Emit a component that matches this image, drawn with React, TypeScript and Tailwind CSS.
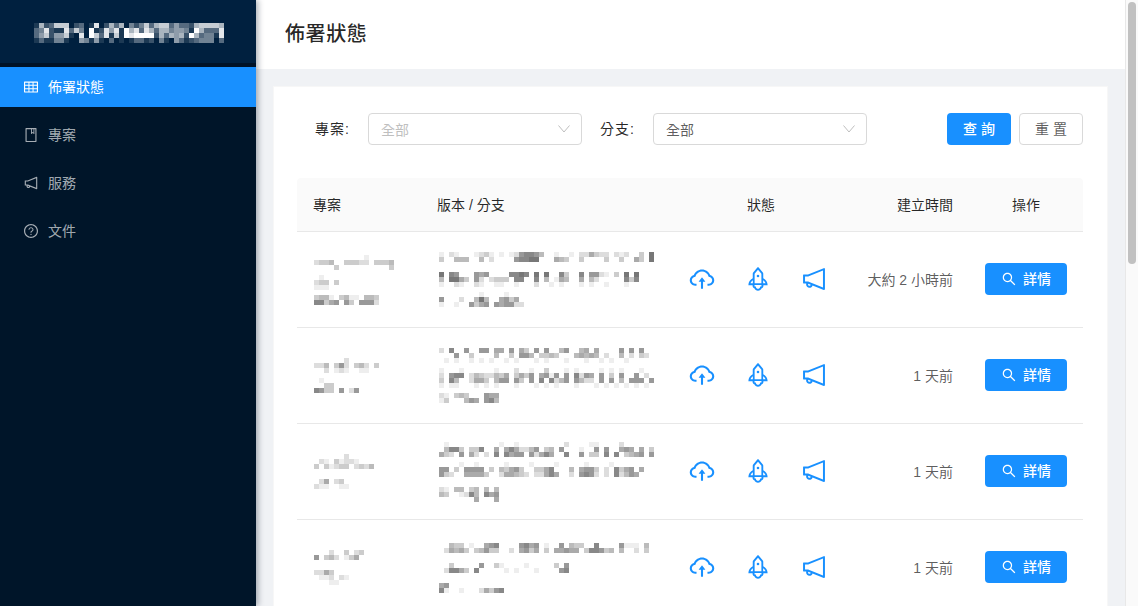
import React from "react";
import { AiOutlineTable, AiOutlineBook, AiOutlineNotification, AiOutlineQuestionCircle, AiOutlineSearch, AiOutlineCloudUpload, AiOutlineRocket } from "react-icons/ai";

function Mosaic({ rows, dark = false }: { rows: string[]; dark?: boolean }) {
  const w = Math.max(...rows.map((r) => r.length)) * 5;
  const h = rows.length * 5;
  const color = (d: number) => {
    if (dark) {
      const t = d / 9;
      return `rgb(${Math.round(255 * t)},${Math.round(32 + 223 * t)},${Math.round(63 + 192 * t)})`;
    }
    const g = 255 - d * 17;
    return `rgb(${g},${g},${g})`;
  };
  return (
    <svg width={w} height={h} viewBox={`0 0 ${w} ${h}`} shapeRendering="crispEdges" className="block shrink-0">
      {rows.map((r, y) =>
        r.split("").map((c, x) => (c === "0" ? null : <rect key={`${x}-${y}`} x={x * 5} y={y * 5} width={5} height={5} fill={color(Number(c))} />))
      )}
    </svg>
  );
}

const logo = [
  "16237770230180263604247367735332677776",
  "34821183740912858196838636645541963338",
  "35725571080973817198999926365629634418",
  "13114410054151030101331204105312344403",
];

const rowsData = [
  {
    p: [
      "0000000000100000",
      "2334003332203334",
      "0000300000000003",
      "0000000000000000",
      "0100000000000000",
      "2330300000000000",
      "1110000000000000",
      "0000000000000000",
      "3441034110443000",
      "7735606306662000",
    ],
    v: [
      "1021000123101012677640010010225322021200308",
      "3004440040200006778800054300300003003005308",
      "0000000000000000000000000000000000000000000",
      "0000000000000000000000000000000000000000000",
      "8076000656000077870808007300706621030808000",
      "4088530620233307700704015400504200000737000",
      "1002100210011001000200101000101001000100000",
      "0000000000000000000000000000000000000000000",
      "0000000010000100000000000000000000000000000",
      "6000200484005635",
      "10010063560656622",
    ],
  },
  {
    p: [
      "00000020000000",
      "22403620342030",
      "00201210011000",
      "00000000000000",
      "01000000000000",
      "00330000000000",
      "76330602600000",
    ],
    v: [
      "2070060066055060530606004600450500006060600",
      "0006003000040030664033430004545402004020320",
      "0101001010100101000101000100010010100100000",
      "0000000000000000000000000000000000000000000",
      "1000100000010002001003000101000010101000100",
      "2067702432243503536056160607265060306006020",
      "3074002553046606306070724606422060604066606",
      "1011000101010001000101010001000101010101010",
      "0000000000000000000000000000000000000000000",
      "210343000655",
      "130004650674",
    ],
  },
  {
    p: [
      "00000020000000",
      "02103122100000",
      "30312330232400",
      "00000000000000",
      "00000000000000",
      "02502300000000",
      "21100110000000",
    ],
    v: [
      "0100000000001001000000000200001100002000000",
      "0477303370050575224603406000100606005650503",
      "5320605202070756606257500700603307070345606",
      "0000000000000000000000000000000000000000000",
      "0000100100000100001000010000010000100000000",
      "6603066660304356300335700040566302073560500",
      "6320055553002554320225750020676202072465000",
      "0000000000000000000000000000000000000000000",
      "0000000000000000000000000000000000000000000",
      "210440340404",
      "430012740756",
      "000000050005",
    ],
  },
  {
    p: [
      "00020030230000",
      "60342013500000",
      "00000000000000",
      "00000000000000",
      "22530000000000",
      "01120210000000",
      "00011000000000",
    ],
    v: [
      "0043301005670000675601006043300700006111040",
      "0254530346330020563503055655037763404002030",
      "0000000000000000000000000000000000000000000",
      "0000000000000000000000000000000000000000000",
      "003000006003100001000003060",
      "02775307000001010001000067",
      "0000000000000000000000000000000000000000000",
      "0000000000000000000000000000000000000000000",
      "56",
      "7100100025367",
    ],
  },
];
const times = ["大約 2 小時前", "1 天前", "1 天前", "1 天前"];

const menu = [
  { Icon: AiOutlineTable, label: "佈署狀態", active: true },
  { Icon: AiOutlineBook, label: "專案" },
  { Icon: AiOutlineNotification, label: "服務" },
  { Icon: AiOutlineQuestionCircle, label: "文件" },
];

const cols = "grid grid-cols-[124px_254px_184px_110px_114px]";

function Select({ text, placeholder }: { text: string; placeholder?: boolean }) {
  return (
    <div className="w-[214px] h-8 border border-[#d9d9d9] rounded bg-white flex items-center justify-between pl-3 pr-[11px]">
      <span className={`pt-px ${placeholder ? "text-[#bfbfbf]" : "text-[#000000a6]"}`}>{text}</span>
      <svg width="12" height="8" viewBox="0 0 12 8" fill="none" stroke="#bfbfbf" strokeWidth="1">
        <polyline points="0.5,0.5 6,7 11.5,0.5" />
      </svg>
    </div>
  );
}

export default function App() {
  return (
    <div
      className="flex h-screen w-full overflow-hidden bg-[#f0f2f5] text-sm text-[#000000a6]"
      style={{ fontFamily: '"Liberation Sans","Noto Sans CJK TC",sans-serif' }}
    >
      <aside className="w-[256px] shrink-0 bg-[#001529] shadow-[2px_0_6px_rgba(0,21,41,0.35)] z-10 flex flex-col">
        <div className="h-[63px] bg-[#00203f] flex items-center pl-[34px] pt-[3px]">
          <Mosaic rows={logo} dark />
        </div>
        <div className="h-1 bg-[#001226]" />
        <nav className="flex flex-col gap-2">
          {menu.map(({ Icon, label, active }) => (
            <div
              key={label}
              className={`h-10 flex items-center pl-[23px] gap-[9px] ${active ? "bg-[#1890ff] text-white" : "text-[#ffffffa6]"}`}
            >
              <Icon size={16} />
              <span>{label}</span>
            </div>
          ))}
        </nav>
      </aside>

      <div className="flex-1 min-w-0 flex flex-col">
        <header className="h-[69px] shrink-0 bg-white flex items-center pl-[29px]">
          <h1 className="text-[20px] font-medium text-[#000000d9] tracking-[0.6px]">佈署狀態</h1>
        </header>
        <main className="flex-1 min-h-0 pt-[17px] pl-[17px] pr-[17px]">
          <div className="bg-white border border-[#f7f7f7] pt-[26px] pl-[23px] pr-[24px]">
            <div className="h-8 flex items-center">
              <span className="ml-[18px] w-[53px] tracking-[1px] text-[#000000d9]">專案:</span>
              <Select text="全部" placeholder />
              <span className="ml-[18px] w-[53px] tracking-[1px] text-[#000000d9]">分支:</span>
              <Select text="全部" />
              <button className="ml-auto w-16 h-8 rounded bg-[#1890ff] text-white font-medium">查 詢</button>
              <button className="ml-2 w-16 h-8 rounded border border-[#d9d9d9] bg-white">重 置</button>
            </div>

            <div className="mt-[33px] w-[786px]">
              <div className={`${cols} h-[54px] items-center bg-[#fafafa] border-b border-[#e8e8e8] rounded-t text-[#000000d9]`}>
                <div className="pl-4">專案</div>
                <div className="pl-4">版本 / 分支</div>
                <div className="text-center pr-[12px]">狀態</div>
                <div className="text-right pr-4">建立時間</div>
                <div className="text-center">操作</div>
              </div>
              {rowsData.map((r, i) => (
                <div key={i} className={`${cols} h-[96px] items-center border-b border-[#e8e8e8]`}>
                  <div className="pl-[17px]"><Mosaic rows={r.p} /></div>
                  <div className="pl-[18px]"><Mosaic rows={r.v} /></div>
                  <div className="flex items-center gap-7 pl-[13px] pb-[2px] text-[#1890ff]">
                    <AiOutlineCloudUpload size={28} />
                    <AiOutlineRocket size={28} />
                    <AiOutlineNotification size={28} />
                  </div>
                  <div className="text-right pr-4">{times[i]}</div>
                  <div className="flex justify-center pb-[2px]">
                    <button className="w-[82px] h-8 rounded bg-[#1890ff] text-white font-medium flex items-center justify-center gap-[6px]">
                      <AiOutlineSearch size={16} />
                      <span>詳情</span>
                    </button>
                  </div>
                </div>
              ))}
            </div>
          </div>
        </main>
      </div>

      <div className="w-[13px] shrink-0 bg-[#fafafa] border-l border-[#e8e8e8] pl-[2px] pt-[2px]">
        <div className="w-2 h-[262px] rounded bg-[#c1c1c1]" />
      </div>
    </div>
  );
}
